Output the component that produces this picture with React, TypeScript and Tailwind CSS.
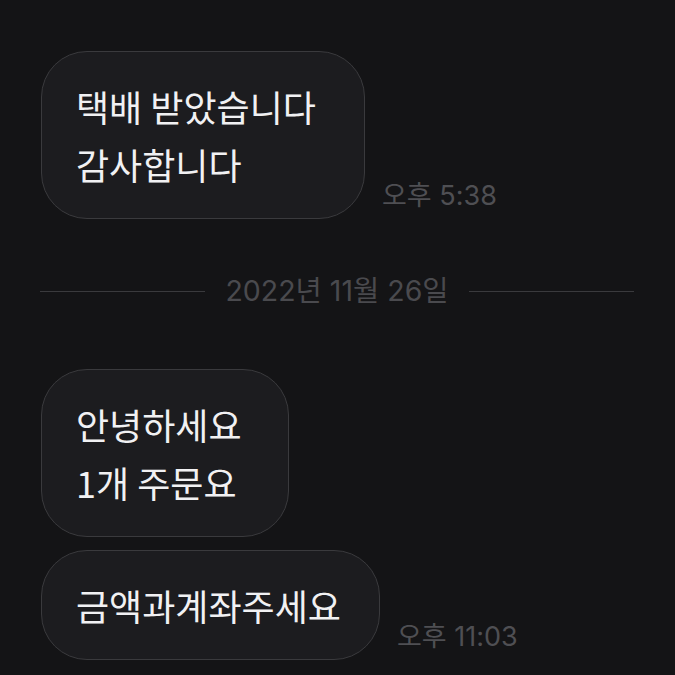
const font = { fontFamily: '"Noto Sans CJK KR", "Noto Sans", sans-serif' }
const metaFont = { fontFamily: 'Inter, "Noto Sans CJK KR", sans-serif' }

function Bubble({ lines, width }: { lines: string[]; width: string }) {
  return (
    <div
      className={`${width} rounded-[46px] border border-[#3a3a3d] bg-[#1c1c1f] pl-[34px] py-[25px] text-[36px] leading-[58px] text-[#f1f1f3]`}
    >
      {lines.map((l) => (
        <div key={l} className="whitespace-nowrap">
          {l}
        </div>
      ))}
    </div>
  )
}

function Time({ children }: { children: React.ReactNode }) {
  return (
    <div className="mb-[8px] text-[27px] leading-[30px] text-[#4f4f53]" style={metaFont}>
      {children}
    </div>
  )
}

export default function App() {
  return (
    <div className="h-[675px] w-full overflow-hidden bg-[#141416]" style={font}>
      <div className="flex flex-col pt-[51px]">
        <div className="flex items-end gap-[17px] pl-[41px]">
          <Bubble width="w-[324px]" lines={['택배 받았습니다', '감사합니다']} />
          <Time>오후 5:38</Time>
        </div>

        <div className="mt-[56px] flex h-[32px] items-center gap-[20px] pl-[40px] pr-[41px]">
          <div className="h-px flex-1 bg-[#3a3a3d]" />
          <div className="text-[28.5px] leading-[32px] text-[#4a4a4e]" style={metaFont}>
            2022년 11월 26일
          </div>
          <div className="h-px flex-1 bg-[#3a3a3d]" />
        </div>

        <div className="mt-[62px] flex flex-col gap-[13px] pl-[41px]">
          <Bubble width="w-[248px]" lines={['안녕하세요', '1개 주문요']} />
          <div className="flex items-end gap-[17px]">
            <Bubble width="w-[339px]" lines={['금액과계좌주세요']} />
            <Time>오후 11:03</Time>
          </div>
        </div>
      </div>
    </div>
  )
}
